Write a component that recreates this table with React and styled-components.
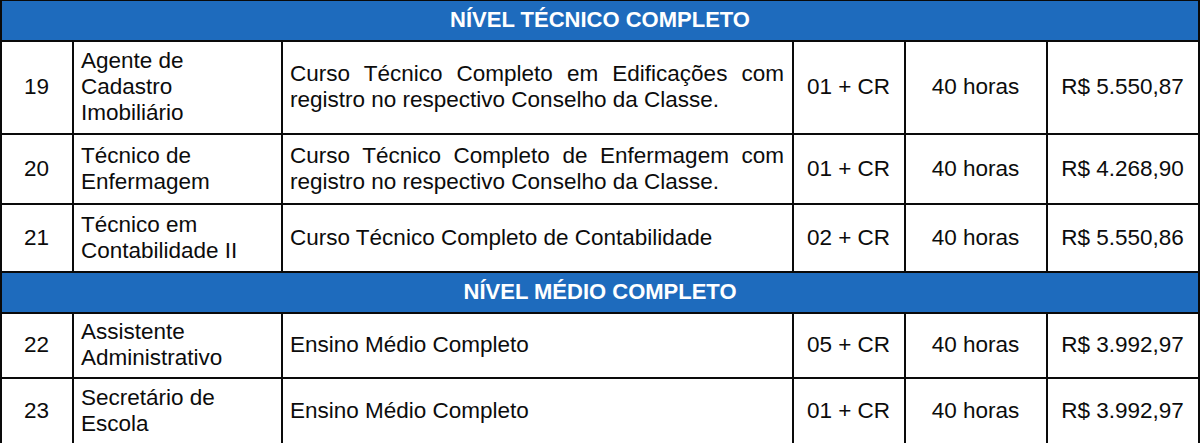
import styled, { createGlobalStyle } from "styled-components";

const columns = [72, 209, 511, 112, 142, 152];

const rows = [
  { section: "NÍVEL TÉCNICO COMPLETO", h: 40 },
  {
    num: "19",
    cargo: ["Agente de", "Cadastro", "Imobiliário"],
    req: "Curso Técnico Completo em Edificações com registro no respectivo Conselho da Classe.",
    vagas: "01 + CR",
    carga: "40 horas",
    salario: "R$ 5.550,87",
    h: 93,
  },
  {
    num: "20",
    cargo: ["Técnico de", "Enfermagem"],
    req: "Curso Técnico Completo de Enfermagem com registro no respectivo Conselho da Classe.",
    vagas: "01 + CR",
    carga: "40 horas",
    salario: "R$ 4.268,90",
    h: 70,
  },
  {
    num: "21",
    cargo: ["Técnico em", "Contabilidade II"],
    req: "Curso Técnico Completo de Contabilidade",
    vagas: "02 + CR",
    carga: "40 horas",
    salario: "R$ 5.550,86",
    h: 68,
  },
  { section: "NÍVEL MÉDIO COMPLETO", h: 41 },
  {
    num: "22",
    cargo: ["Assistente", "Administrativo"],
    req: "Ensino Médio Completo",
    vagas: "05 + CR",
    carga: "40 horas",
    salario: "R$ 3.992,97",
    h: 65,
  },
  {
    num: "23",
    cargo: ["Secretário de", "Escola"],
    req: "Ensino Médio Completo",
    vagas: "01 + CR",
    carga: "40 horas",
    salario: "R$ 3.992,97",
    h: 67,
  },
];

export default function App() {
  return (
    <>
      <GlobalStyle />
      <Table>
        <colgroup>
          {columns.map((w, i) => (
            <Col key={i} $w={w} />
          ))}
        </colgroup>
        <tbody>
          {rows.map((row, i) =>
            row.section ? (
              <Row key={i} $h={row.h}>
                <SectionCell colSpan={6}>{row.section}</SectionCell>
              </Row>
            ) : (
              <Row key={i} $h={row.h}>
                <Cell $align="center">{row.num}</Cell>
                <Cell>
                  {row.cargo.map((line) => (
                    <Line key={line}>{line}</Line>
                  ))}
                </Cell>
                <Cell $align="justify">{row.req}</Cell>
                <Cell $align="center">{row.vagas}</Cell>
                <Cell $align="center">{row.carga}</Cell>
                <Cell $align="center">{row.salario}</Cell>
              </Row>
            )
          )}
        </tbody>
      </Table>
    </>
  );
}

const GlobalStyle = createGlobalStyle`
  body {
    margin: 0;
    background: #ffffff;
    font-family: "Liberation Sans", Arial, sans-serif;
    overflow: hidden;
  }
`;

const Table = styled.table`
  width: 1198px;
  table-layout: fixed;
  border-collapse: collapse;
  color: #0c0c0c;
  font-size: 22.5px;
  line-height: 26px;
`;

const Col = styled.col`
  width: ${(p) => p.$w}px;
`;

const Row = styled.tr`
  height: ${(p) => p.$h}px;
`;

const SectionCell = styled.td`
  background: #1e6bbd;
  color: #ffffff;
  font-weight: bold;
  font-size: 22px;
  text-align: center;
  padding: 4px 8px;
  border: 2px solid #0a0a0a;
  border-top-width: 1px;
`;

const Cell = styled.td`
  border: 2px solid #0a0a0a;
  padding: 5px 8px 5px 7px;
  vertical-align: middle;
  text-align: ${(p) => p.$align || "left"};
  text-align-last: ${(p) => (p.$align === "justify" ? "left" : "auto")};
`;

const Line = styled.div`
  white-space: nowrap;
`;
